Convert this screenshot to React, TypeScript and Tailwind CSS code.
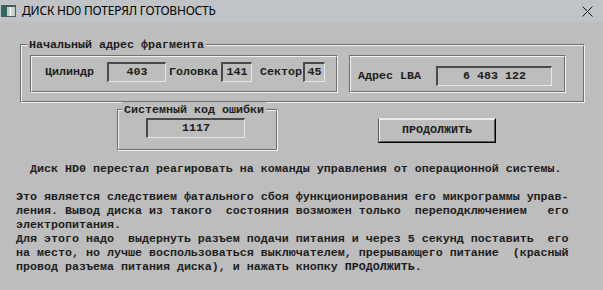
const MONO = "font-['Liberation_Mono','Courier_New',monospace] text-[11.67px] font-bold text-[#1c1c1c]"

// Etched (groove) frame: dark outer top/left, light inner top/left
function Etched({ className, children }: { className: string, children?: React.ReactNode }) {
  return (
    <div className={`border border-t-[#6e6e6e] border-l-[#6e6e6e] border-b-[#f2f2f2] border-r-[#f2f2f2] ${className}`}>
      <div className="h-full border border-t-[#f2f2f2] border-l-[#f2f2f2] border-b-[#6e6e6e] border-r-[#6e6e6e]">
        {children}
      </div>
    </div>
  )
}

function Field({ value, className }: { value: string, className: string }) {
  return (
    <div className={`h-[20px] flex items-center justify-center leading-none
                     border-t-2 border-l-2 border-r border-b
                     border-t-[#4a4a4a] border-l-[#4a4a4a]
                     border-r-[#e6e6e6] border-b-[#e6e6e6] ${className}`}>
      {value}
    </div>
  )
}

const TEXT = [
  '  Диск HD0 перестал реагировать на команды управления от операционной системы.',
  '',
  'Это является следствием фатального сбоя функционирования его микрограммы управ-',
  'ления. Вывод диска из такого  состояния возможен только  переподключением   его',
  'электропитания.',
  'Для этого надо  выдернуть разъем подачи питания и через 5 секунд поставить  его',
  'на место, но лучше воспользоваться выключателем, прерывающего питание  (красный',
  'провод разъема питания диска), и нажать кнопку ПРОДОЛЖИТЬ.',
].join('\n')

export default function App() {
  return (
    <div className={`w-[603px] h-[290px] bg-[#bdbdbd] overflow-hidden ${MONO}`}>

      {/* Title bar */}
      <div className="h-[22px] bg-[#c0c4c7] flex items-center">
        <svg width="15" height="12" viewBox="0 0 15 12" className="ml-[1px]">
          <rect x="0" y="0" width="15" height="12" fill="#4d5a60"/>
          <rect x="1" y="2" width="5" height="9" fill="#2c6a62"/>
          <rect x="6" y="2" width="8" height="9" fill="#c9d0d2"/>
          <rect x="9" y="2" width="1" height="9" fill="#ffffff"/>
        </svg>
        <span className="ml-[6px] font-['Noto_Sans',sans-serif] font-normal text-[12px] text-black tracking-[-0.2px]">
          ДИСК HD0 ПОТЕРЯЛ ГОТОВНОСТЬ
        </span>
        <svg width="11" height="11" viewBox="0 0 11 11" className="ml-auto mr-[10px]">
          <path d="M0.5 0.5L10.5 10.5M10.5 0.5L0.5 10.5" stroke="#111" strokeWidth="1"/>
        </svg>
      </div>

      {/* Fragment address group */}
      <Etched className="ml-[20px] mt-[22px] w-[565px] h-[59px]">
        <div className="-mt-[9px] ml-[5px] w-fit px-[2px] h-[16px] leading-[16px] bg-[#bdbdbd]">
          Начальный адрес фрагмента
        </div>
        <div className="flex mt-[2px] ml-[8px]">
          <Etched className="w-[308px] h-[38px]">
            <div className="flex items-center pt-[5px] pl-[13px] leading-[20px]">
              <span>Цилиндр</span>
              <Field value="403" className="ml-[13px] w-[59px]"/>
              <span className="ml-[3px]">Головка</span>
              <Field value="141" className="ml-[3px] w-[31px]"/>
              <span className="ml-[8px]">Сектор</span>
              <Field value="45" className="ml-[1px] w-[22px]"/>
            </div>
          </Etched>
          <Etched className="ml-[11px] w-[217px] h-[38px]">
            <div className="flex items-center pt-[9px] pl-[7px] leading-[20px]">
              <span>Адрес LBA</span>
              <Field value="6 483 122" className="ml-[15px] w-[116px]"/>
            </div>
          </Etched>
        </div>
      </Etched>

      {/* Error code + button */}
      <div className="flex items-start mt-[6px]">
        <Etched className="ml-[117px] w-[161px] h-[42px]">
          <div className="-mt-[9px] ml-[3px] w-fit px-[2px] h-[16px] leading-[16px] bg-[#bdbdbd]">
            Системный код ошибки
          </div>
          <Field value="1117" className="ml-[27px] w-[99px]"/>
        </Etched>
        <button className="ml-[100px] mt-[9px] w-[118px] h-[25px]
                           border border-t-[#ededed] border-l-[#5a5a5a]
                           border-b-black border-r-black">
          <div className="h-full flex items-center justify-center
                          border border-t-[#ededed] border-l-[#ededed]
                          border-b-[#5a5a5a] border-r-[#5a5a5a]">
            ПРОДОЛЖИТЬ
          </div>
        </button>
      </div>

      {/* Message */}
      <pre className={`mt-[11px] ml-[16px] leading-[14px] whitespace-pre ${MONO}`}>
        {TEXT}
      </pre>

    </div>
  )
}
